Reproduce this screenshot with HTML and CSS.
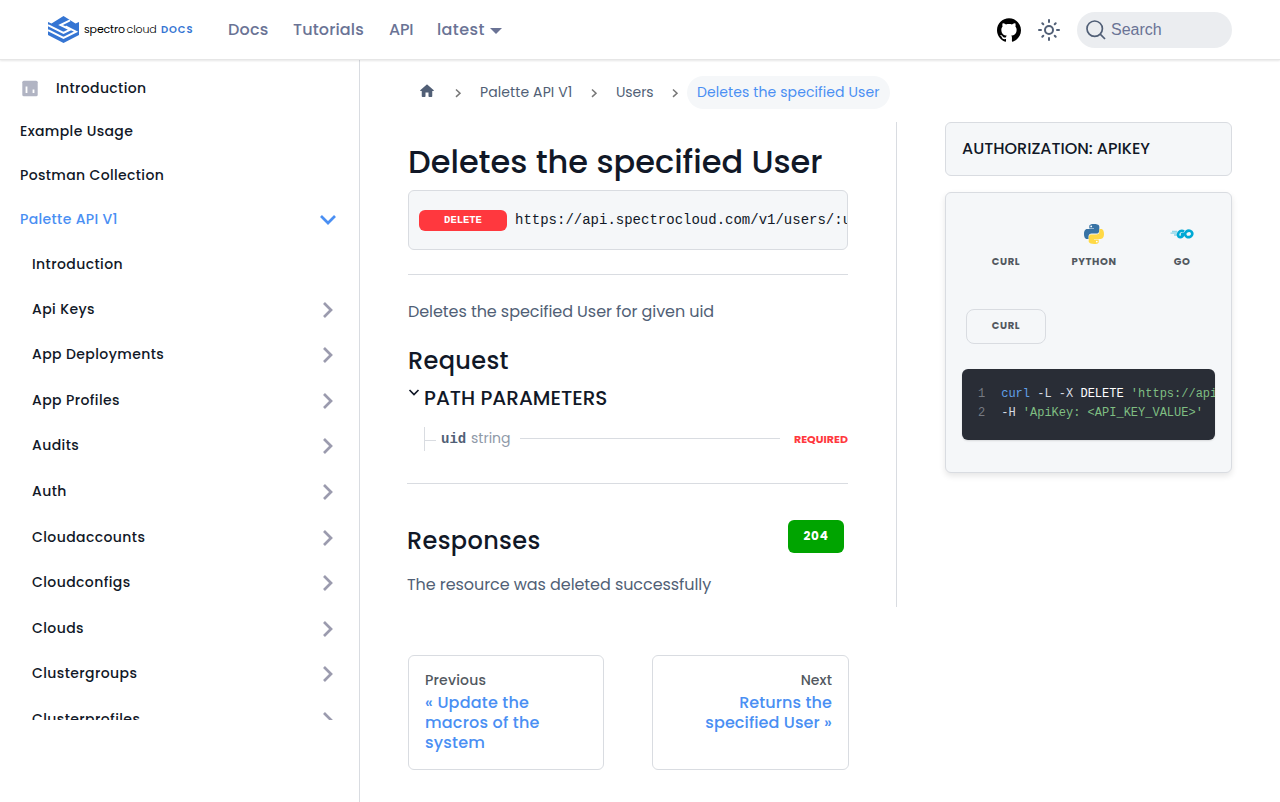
FILE: index.html
```html
<!DOCTYPE html>
<html lang="en">
<head>
<meta charset="utf-8">
<title>Deletes the specified User | Spectro Cloud</title>
<link rel="stylesheet" href="styles.css">
</head>
<body>
<header class="navbar">
  <a class="brand">
    <svg class="brand-mark" viewBox="0 0 31 27" width="31" height="27"><path fill="#3575d3" d="M0 6 3.500 7.600 15.500 0 27.500 7.600 31 6V19L15.500 27 0 19Z"/><path fill="none" stroke="#fff" stroke-width="2" d="M22 4.300 12.500 9 22 13.700 15.500 17 0 9.200M0 14.200 15.500 22 28 15.700 17.500 10.300"/></svg>
    <span class="brand-name">spectro <span class="thin">cloud</span></span><span class="brand-docs">DOCS</span>
  </a>
  <nav class="nav-links"><a class="n1">Docs</a><a class="n2">Tutorials</a><a class="n3">API</a><a class="n4">latest<i class="caret"></i></a></nav>
  <div class="nav-tools">
    <svg class="github" width="24" height="24" viewBox="0 0 24 24"><path d="M12 .297c-6.63 0-12 5.373-12 12 0 5.303 3.438 9.8 8.205 11.385.6.113.82-.258.82-.577 0-.285-.01-1.04-.015-2.04-3.338.724-4.042-1.61-4.042-1.61C4.422 18.07 3.633 17.7 3.633 17.7c-1.087-.744.084-.729.084-.729 1.205.084 1.838 1.236 1.838 1.236 1.07 1.835 2.809 1.305 3.495.998.108-.776.417-1.305.76-1.605-2.665-.3-5.466-1.332-5.466-5.93 0-1.31.465-2.38 1.235-3.22-.135-.303-.54-1.523.105-3.176 0 0 1.005-.322 3.3 1.23.96-.267 1.98-.399 3-.405 1.02.006 2.04.138 3 .405 2.28-1.552 3.285-1.23 3.285-1.23.645 1.653.24 2.873.12 3.176.765.84 1.23 1.91 1.23 3.22 0 4.61-2.805 5.625-5.475 5.92.42.36.81 1.096.81 2.22 0 1.606-.015 2.896-.015 3.286 0 .315.21.69.825.57C20.565 22.092 24 17.592 24 12.297c0-6.627-5.373-12-12-12"/></svg>
    <svg class="sun" width="24" height="24" viewBox="0 0 24 24" fill="none" stroke="#515f76" stroke-width="2" stroke-linecap="round"><circle cx="12" cy="12" r="4"/><path d="M12 2v2M12 20v2M2 12h2M20 12h2M5.300 5.300l1 1M17.700 17.700l1 1M5.300 18.700l1-1M17.700 6.300l1-1"/></svg>
    <div class="search"><svg width="20" height="20" viewBox="0 0 20 20" fill="none" stroke="#515f76" stroke-width="1.700"><circle cx="8.700" cy="8.700" r="7.700"/><path d="M14.200 14.200 19 19"/></svg><span>Search</span></div>
  </div>
</header>
<div class="page">
  <aside class="sidebar">
    <ul class="menu">
      <li class="leaf"><svg class="doc-icon" width="20" height="20" viewBox="0 0 20 20"><rect x="2.300" y="1.800" width="15.400" height="15.400" rx="1.500" fill="#b1b4c3"/><path d="M6.500 7.500v6.500M13.500 10.500V14" stroke="#fff" stroke-width="1.800"/></svg><span>Introduction</span></li>
      <li class="leaf"><span>Example Usage</span></li>
      <li class="leaf"><span>Postman Collection</span></li>
      <li class="cat open"><span>Palette API V1</span><svg class="chev" viewBox="0 0 20 20"><path d="m3 6 7 7 7-7"/></svg></li>
      <li class="leaf sub"><span>Introduction</span></li>
      <li class="cat sub"><span>Api Keys</span><svg class="chev" viewBox="0 0 20 20"><path d="m7 3 7 7-7 7"/></svg></li>
      <li class="cat sub"><span>App Deployments</span><svg class="chev" viewBox="0 0 20 20"><path d="m7 3 7 7-7 7"/></svg></li>
      <li class="cat sub"><span>App Profiles</span><svg class="chev" viewBox="0 0 20 20"><path d="m7 3 7 7-7 7"/></svg></li>
      <li class="cat sub"><span>Audits</span><svg class="chev" viewBox="0 0 20 20"><path d="m7 3 7 7-7 7"/></svg></li>
      <li class="cat sub"><span>Auth</span><svg class="chev" viewBox="0 0 20 20"><path d="m7 3 7 7-7 7"/></svg></li>
      <li class="cat sub"><span>Cloudaccounts</span><svg class="chev" viewBox="0 0 20 20"><path d="m7 3 7 7-7 7"/></svg></li>
      <li class="cat sub"><span>Cloudconfigs</span><svg class="chev" viewBox="0 0 20 20"><path d="m7 3 7 7-7 7"/></svg></li>
      <li class="cat sub"><span>Clouds</span><svg class="chev" viewBox="0 0 20 20"><path d="m7 3 7 7-7 7"/></svg></li>
      <li class="cat sub"><span>Clustergroups</span><svg class="chev" viewBox="0 0 20 20"><path d="m7 3 7 7-7 7"/></svg></li>
      <li class="cat sub"><span>Clusterprofiles</span><svg class="chev" viewBox="0 0 20 20"><path d="m7 3 7 7-7 7"/></svg></li>
    </ul>
  </aside>
  <main class="main">
    <nav class="crumbs">
      <svg class="home" width="18" height="18" viewBox="0 0 24 24"><path d="M10 19v-5h4v5c0 .55.45 1 1 1h3c.55 0 1-.45 1-1v-7h1.700c.46 0 .68-.57.33-.87L12.670 3.600c-.38-.34-.96-.34-1.340 0l-8.360 7.530c-.34.3-.13.87.33.87H5v7c0 .55.45 1 1 1h3c.55 0 1-.45 1-1z" fill="#515f76"/></svg>
      <svg class="sep s1" viewBox="0 0 8 10"><path d="m2 1.500 4 3.700-4 3.700"/></svg><a class="c1">Palette API V1</a>
      <svg class="sep s2" viewBox="0 0 8 10"><path d="m2 1.500 4 3.700-4 3.700"/></svg><a class="c2">Users</a>
      <svg class="sep s3" viewBox="0 0 8 10"><path d="m2 1.500 4 3.700-4 3.700"/></svg><a class="current">Deletes the specified User</a>
    </nav>
    <div class="columns">
      <article class="article">
        <h1>Deletes the specified User</h1>
        <div class="endpoint"><span class="method">DELETE</span><span class="url">https://api.spectrocloud.com/v1/users/:uid</span></div>
        <hr class="rule">
        <p class="desc">Deletes the specified User for given uid</p>
        <h2 class="request">Request</h2>
        <div class="params"><svg width="12" height="12" viewBox="0 0 12 12"><path d="m1.500 4 4.500 4.500 4.500-4.500" fill="none" stroke="#111827" stroke-width="1.700"/></svg><h3>PATH PARAMETERS</h3></div>
        <div class="param"><i class="twig"></i><b>uid</b><span class="type">string</span><i class="line"></i><strong>REQUIRED</strong></div>
        <hr class="rule wide">
        <div class="responses"><h2>Responses</h2><span class="status">204</span></div>
        <p class="result">The resource was deleted successfully</p>
      </article>
      <section class="panel">
        <div class="auth">AUTHORIZATION: APIKEY</div>
        <div class="samples">
          <div class="langs">
            <div class="lang"><span class="logo"></span><span>CURL</span></div>
            <div class="lang"><svg class="logo" viewBox="0 0 20 20"><path fill="#3873a5" d="M9.900 0C5 0 5.300 2.100 5.300 2.100v2.300H10V5H3.400S0 4.700 0 9.900s2.900 5 2.900 5h1.700v-2.400s-.1-3 2.900-3h5s2.800 0 2.800-2.800V2.700S15.700 0 9.900 0z"/><circle cx="7.200" cy="2.400" r=".9" fill="#fff"/><path fill="#ffd946" d="M10.100 20c4.900 0 4.600-2.100 4.600-2.100v-2.300H10V15h6.600S20 15.300 20 10.100s-2.900-5-2.900-5h-1.700v2.400s.1 3-2.900 3h-5s-2.800 0-2.800 2.800v4S4.300 20 10.100 20z"/><circle cx="12.800" cy="17.600" r=".9" fill="#fff"/></svg><span>PYTHON</span></div>
            <div class="lang"><svg class="logo go" viewBox="0 0 24 10"><path d="M2 2.500h5M.5 4.200h6.500M4 6h3" stroke="#8fd8ea" stroke-width="1.300"/><g fill="none" stroke="#00a9d5" stroke-width="2.700"><path d="M14 2.600C11.500.7 8.300 2.300 8 5.600c-.1 3.300 4.300 3.600 5.500-.4H10.800"/><ellipse cx="18.700" cy="4.900" rx="3.600" ry="3.200" transform="rotate(-20 18.700 4.900)"/></g></svg><span>GO</span></div>
          </div>
          <div class="variant">CURL</div>
          <div class="code"><div><i>1</i><span><em>curl</em> -L -X <b>DELETE</b> <q>'https://api.spectrocloud.com/v1/users/:uid'</q></span></div><div><i>2</i><span>-H <q>'ApiKey: &lt;API_KEY_VALUE&gt;'</q></span></div></div>
        </div>
      </section>
    </div>
    <nav class="pager">
      <a class="prev"><small>Previous</small><span>« Update the<br>macros of the<br>system</span></a>
      <a class="next"><small>Next</small><span>Returns the<br>specified User »</span></a>
    </nav>
  </main>
</div>
</body>
</html>
```
FILE: styles.css
```css
* { box-sizing: border-box; }
body { margin: 0; height: 802px; overflow: hidden; background: #fff; color: #111827; font-family: Poppins, Inter, sans-serif; font-size: 16px; text-rendering: optimizeLegibility; -webkit-font-smoothing: antialiased; }
h1, h2, h3, p, ul { margin: 0; padding: 0; font-weight: 500; white-space: nowrap; }
svg { flex: none; }
i { font-style: normal; }
.navbar { position: relative; z-index: 2; display: flex; align-items: center; height: 60px; padding: 0 48px; background: #fff; box-shadow: 0 1px 2px rgba(0,0,0,.1); border-bottom: 1px solid #e6e6e6; }
.brand { display: flex; align-items: center; width: 180px; white-space: nowrap; }
.brand-name { width: 77px; margin-left: 5px; font-size: 11px; letter-spacing: -.15px; word-spacing: -1px; color: #000; }
.thin { font-weight: 300; }
.brand-docs { color: #3575d3; font-size: 10px; font-weight: 600; letter-spacing: .9px; }
.nav-links { display: flex; gap: 24px; color: #6a7395; font-weight: 500; }
.nav-links a { white-space: nowrap; }
.n1 { width: 41px; letter-spacing: .2px; } .n2 { width: 72px; letter-spacing: .15px; } .n3 { width: 24px; letter-spacing: -.2px; }
.n4 { display: flex; align-items: center; gap: 5px; letter-spacing: .4px; }
.caret { border: 6.500px solid transparent; border-top-color: #6a7395; border-bottom: 0; margin-top: 2px; }
.nav-tools { display: flex; align-items: center; margin-left: auto; }
.github { margin-right: 16px; } .sun { width: 24px; margin-right: 16px; }
.search { display: flex; align-items: center; gap: 5px; width: 155px; height: 36px; padding-left: 9px; border-radius: 18px; background: #ebedf0; color: #6a7395; font-family: "Liberation Sans", sans-serif; }
.page { display: flex; height: 742px; }
.sidebar { width: 360px; flex: none; border-right: 1px solid #d9dce1; }
.menu { height: 660px; padding-top: 6.700px; overflow: hidden; list-style: none; }
.menu li { display: flex; align-items: center; padding: 0 20px; font-size: 14px; font-weight: 500; letter-spacing: .35px; }
.menu .leaf { height: 43.500px; }
.menu .cat { height: 45.600px; justify-content: space-between; }
.menu .sub { padding-left: 32px; letter-spacing: .4px; }
.menu .open { color: #4a8ff3; }
.doc-icon { margin: 2px 16px 0 0; }
.chev { width: 20px; height: 20px; margin: 1px 2px 0 0; fill: none; stroke: #9b9bae; stroke-width: 2.700; }
.open .chev { margin-right: 1px; stroke: #4a8ff3; }
.main { flex: 1; padding: 16px 48px 0; }
.crumbs { display: flex; align-items: center; height: 33px; padding-left: 10px; color: #515f76; font-size: 14px; letter-spacing: .1px; white-space: nowrap; }
.sep { width: 8px; height: 10px; fill: none; stroke: #777; stroke-width: 1.500; }
.home { margin-bottom: 3px; }
.s1 { margin: 1px 18px 0; } .s2 { margin: 1px 18px 0; } .s3 { margin: 1px 8px 0 14px; }
.c1 { width: 92px; } .c2 { width: 41px; letter-spacing: -.1px; margin-right: 0; }
.current { width: 203px; padding: 0 10px; line-height: 33px; border-radius: 17px; background: #f5f7f9; color: #4a8ff3; }
.columns { display: flex; gap: 48px; height: 485px; margin-top: 13px; }
.article { width: 489px; padding-right: 48px; border-right: 1px solid #d9dce1; }
h1 { height: 68px; padding-top: 15px; font-size: 32px; line-height: 50px; }
.endpoint { display: flex; align-items: center; gap: 8px; height: 60px; padding-left: 10px; overflow: hidden; border: 1px solid #d9dce1; border-radius: 6px; background: #f5f7f9; font: 14px "Liberation Mono", monospace; }
.method { flex: none; width: 88px; height: 21px; border-radius: 6px; background: #ff383e; color: #fff; font-size: 10.500px; font-weight: 700; line-height: 20px; text-align: center; }
.rule { height: 1px; margin: 24px 0 0; border: 0; background: #d9dce1; }
.desc { margin-top: 24px; color: #515f76; line-height: 26px; font-weight: 400; letter-spacing: -.07px; }
h2 { font-size: 24px; line-height: 36px; letter-spacing: .35px; }
.request { margin-top: 18px; }
.params { display: flex; height: 32px; gap: 4px; padding-top: 7px; }
h3 { font-size: 20px; line-height: 24px; }
.param { display: flex; align-items: center; height: 24px; margin: 16px 0 0 16px; border-left: 1px solid #d9dce1; font-size: 14px; color: #515f76; }
.param b { width: 30px; font-family: "Liberation Mono", monospace; }
.twig { width: 11px; height: 1px; margin: 3px 5px 0 0; background: #d9dce1; }
.type { width: 40px; margin-top: -2px; color: #8f99a8; }
.line { flex: 1; height: 1px; margin: 0 14px 1px 9px; background: #d9dce1; }
.param strong { width: 54px; font-size: 11px; color: #ff383e; white-space: nowrap; }
.wide { margin: 32px 0 0 -1px; }
.responses { display: flex; justify-content: space-between; margin: 36px 4px 0 -1px; }
.responses h2 { padding-top: 3px; }
.status { width: 56px; height: 33px; border-radius: 6px; background: #00a400; color: #fff; font-size: 12px; font-weight: 700; line-height: 32px; letter-spacing: .8px; text-align: center; }
.result { margin: 13px 0 0 -1px; color: #515f76; line-height: 26px; font-weight: 400; letter-spacing: -.07px; }
.panel { width: 287px; }
.auth { height: 54px; padding-left: 16px; border: 1px solid #d9dce1; border-radius: 6px; background: #f5f7f9; font-weight: 500; line-height: 52px; white-space: nowrap; }
.samples { height: 281px; margin-top: 16px; padding: 31px 16px 0; border: 1px solid #d9dce1; border-radius: 6px; background: #f5f7f9; box-shadow: 0 3px 6px rgba(0,0,0,.1); }
.langs { display: flex; gap: 8px; height: 85px; padding-left: 4px; overflow: hidden; }
.lang { display: flex; flex: none; flex-direction: column; align-items: center; width: 80px; gap: 10px; }
.lang, .variant { color: #525860; font-size: 10px; font-weight: 700; letter-spacing: .6px; line-height: 16px; }
.logo { width: 20px; height: 20px; }
.logo.go { width: 24px; }
.variant { width: 80px; height: 35px; margin-left: 4px; border: 1px solid #d9dce1; border-radius: 8px; line-height: 32px; text-align: center; }
.code { height: 71px; margin-top: 25px; padding: 16px 0 0 16px; overflow: hidden; border-radius: 6px; background: #292d36; color: #d5dae3; box-shadow: 0 1px 2px rgba(0,0,0,.12); font: 12px/19px "Liberation Mono", monospace; white-space: pre; }
.code div { display: flex; gap: 16px; }
.code i { color: #767a82; }
.code em { color: #61a0e8; font-style: normal; }
.code b { color: #fff; font-weight: 400; }
.code q { color: #7fbe82; quotes: none; }
.pager { display: flex; gap: 48px; margin-top: 48px; }
.pager a { display: flex; flex-direction: column; width: 196px; height: 115px; padding: 14px 16px; border: 1px solid #d9dce1; border-radius: 6px; color: #4a8ff3; font-weight: 500; line-height: 20px; letter-spacing: .2px; white-space: nowrap; }
.pager small { margin-bottom: 3px; color: #525860; font-size: 14px; }
.pager .next { width: 197px; text-align: right; letter-spacing: .1px; }
```
